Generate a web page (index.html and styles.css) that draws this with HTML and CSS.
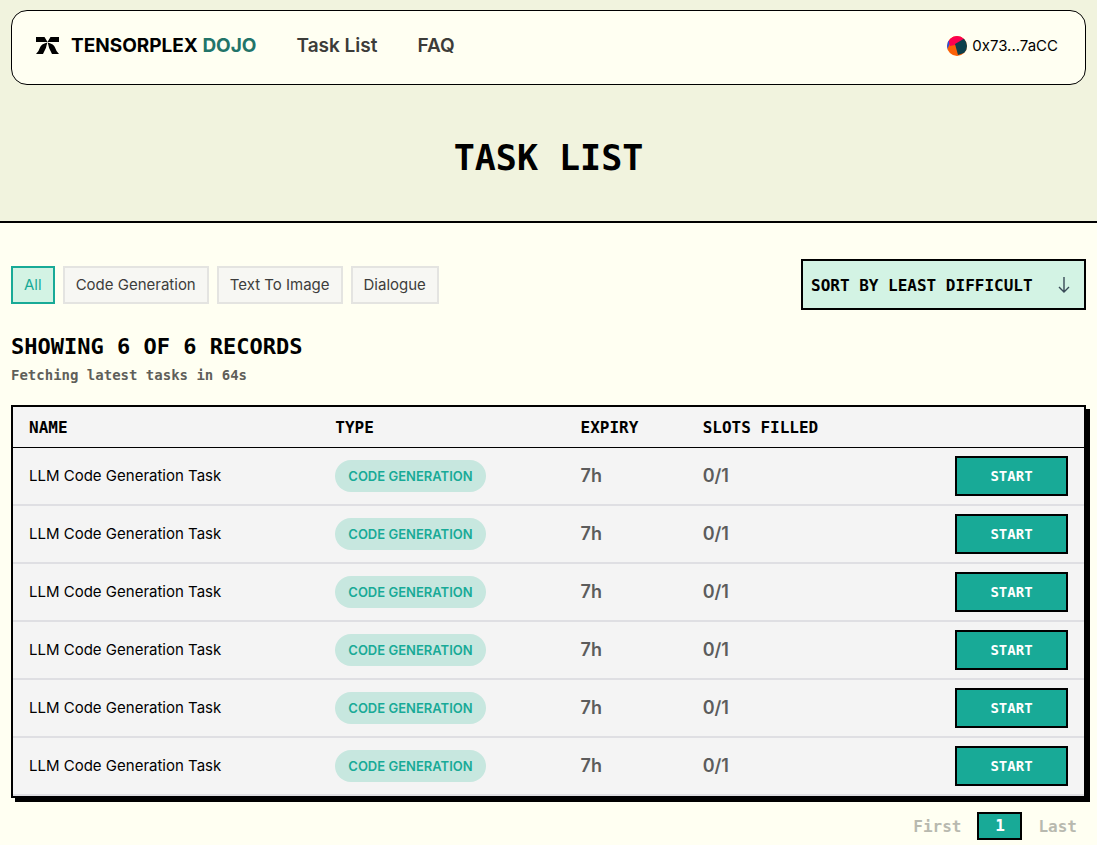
FILE: index.html
```html
<!DOCTYPE html>
<html lang="en">
<head>
<meta charset="utf-8">
<meta name="viewport" content="width=device-width, initial-scale=1">
<title>Tensorplex Dojo - Task List</title>
<link rel="stylesheet" href="styles.css">
</head>
<body>
<header class="hero">
  <nav class="navbar" aria-label="Main">
    <a class="brand" href="#">
      <svg class="brand-mark" viewBox="0 0 24 18" aria-hidden="true">
        <path d="M0 0H8.500L11.500 5H0ZM23 0H14.500L11.500 5H23ZM11.300 5.500Q10.500 11.500 7 17H0Q3 14 4 10.500Q5 7 11.300 5.500ZM11.700 5.500Q12.500 11.500 16 17H23Q20 14 19 10.500Q18 7 11.700 5.500Z"/>
      </svg>
      <span class="brand-name">TENSORPLEX <span class="brand-accent">DOJO</span></span>
    </a>
    <a class="nav-link" href="#">Task List</a>
    <a class="nav-link" href="#">FAQ</a>
    <button class="wallet" type="button">
      <svg class="avatar" viewBox="0 0 20 20" aria-hidden="true">
        <clipPath id="disc"><circle cx="10" cy="10" r="10"/></clipPath>
        <g clip-path="url(#disc)">
          <path fill="#fb6107" d="M0 0H20V20H0Z"/>
          <path fill="#2450e1" d="M0 3L4 5L0 14Z"/>
          <path fill="#fc0150" d="M3 0H20V2L8 9L3 10L2 6Z"/>
          <path fill="#0d404c" d="M8 8L20 1V16L11 19Z"/>
        </g>
      </svg>
      <span>0x73...7aCC</span>
    </button>
  </nav>
  <h1 class="title">TASK LIST</h1>
</header>
<main class="content">
  <div class="toolbar">
    <div class="filters">
      <button class="filter filter-active" type="button">All</button>
      <button class="filter" type="button">Code Generation</button>
      <button class="filter" type="button">Text To Image</button>
      <button class="filter" type="button">Dialogue</button>
    </div>
    <div class="sort">
      <select class="sort-select" aria-label="Sort tasks">
        <option>SORT BY LEAST DIFFICULT</option>
        <option>SORT BY MOST DIFFICULT</option>
      </select>
      <svg class="sort-arrow" viewBox="0 0 12 16" aria-hidden="true"><path d="M6 0V15M1 10L6 15L11 10"/></svg>
    </div>
  </div>
  <h2 class="count">SHOWING 6 OF 6 RECORDS</h2>
  <p class="refresh">Fetching latest tasks in 64s</p>
  <div class="table-box">
    <table class="tasks">
      <colgroup><col class="col-name"><col class="col-type"><col class="col-small"><col class="col-small"><col></colgroup>
      <thead>
        <tr><th>NAME</th><th>TYPE</th><th>EXPIRY</th><th colspan="2">SLOTS FILLED</th></tr>
      </thead>
      <tbody>
        <tr><td>LLM Code Generation Task</td><td><span class="pill">CODE GENERATION</span></td><td class="stat">7h</td><td class="stat">0/1</td><td class="action"><button class="start" type="button">START</button></td></tr>
        <tr><td>LLM Code Generation Task</td><td><span class="pill">CODE GENERATION</span></td><td class="stat">7h</td><td class="stat">0/1</td><td class="action"><button class="start" type="button">START</button></td></tr>
        <tr><td>LLM Code Generation Task</td><td><span class="pill">CODE GENERATION</span></td><td class="stat">7h</td><td class="stat">0/1</td><td class="action"><button class="start" type="button">START</button></td></tr>
        <tr><td>LLM Code Generation Task</td><td><span class="pill">CODE GENERATION</span></td><td class="stat">7h</td><td class="stat">0/1</td><td class="action"><button class="start" type="button">START</button></td></tr>
        <tr><td>LLM Code Generation Task</td><td><span class="pill">CODE GENERATION</span></td><td class="stat">7h</td><td class="stat">0/1</td><td class="action"><button class="start" type="button">START</button></td></tr>
        <tr><td>LLM Code Generation Task</td><td><span class="pill">CODE GENERATION</span></td><td class="stat">7h</td><td class="stat">0/1</td><td class="action"><button class="start" type="button">START</button></td></tr>
      </tbody>
    </table>
  </div>
  <nav class="pager" aria-label="Pages">
    <button class="page-end" type="button" disabled>First</button>
    <button class="page-current" type="button" aria-current="page">1</button>
    <button class="page-end" type="button" disabled>Last</button>
  </nav>
</main>
</body>
</html>
```
FILE: styles.css
```css
:root {
  --cream: #fffff2;
  --green: #18aa97;
  --mint: #d3f3e4;
  --sans: Inter, "Liberation Sans", sans-serif;
  --mono: "DejaVu Sans Mono", "Liberation Mono", monospace;
}

* { box-sizing: border-box; }

body {
  margin: 0;
  background: var(--cream);
  color: #000;
  font: 15px/24px var(--sans);
}

a { color: inherit; text-decoration: none; }
button, select { margin: 0; font: inherit; color: inherit; border-radius: 0; cursor: pointer; }

.hero {
  padding: 10px 11px 40px;
  background: #f1f3de;
  border-bottom: 2px solid #000;
}

.navbar {
  display: flex;
  align-items: center;
  height: 75px;
  padding: 0 27px 4px 24px;
  background: var(--cream);
  border: 1px solid #000;
  border-radius: 16px;
}

.brand { display: flex; align-items: center; gap: 11px; }
.brand-mark { width: 24px; height: 18px; }
.brand-name { font-size: 19px; font-weight: 700; }
.brand-accent { color: #227469; }

.nav-link {
  margin-left: 40px;
  font-size: 19px;
  font-weight: 600;
  color: #3c3c39;
}

.wallet {
  display: flex;
  align-items: center;
  gap: 5px;
  margin-left: auto;
  padding: 0;
  background: none;
  border: 0;
}
.avatar { width: 20px; height: 20px; }

.title {
  margin: 50px 0 0;
  font: 700 35px/46px var(--mono);
  text-align: center;
}

.content { padding: 36px 11px 0; }

.toolbar { display: flex; align-items: center; justify-content: space-between; }
.filters { display: flex; gap: 8px; }

.filter {
  height: 38px;
  padding: 1px 11px 0;
  background: #f7f7f3;
  border: 2px solid #e4e4e1;
  color: #3d3d3b;
}
.filter-active { background: var(--mint); border-color: var(--green); color: var(--green); }

.sort { position: relative; }
.sort-select {
  display: block;
  width: 285px;
  height: 51px;
  padding: 2px 40px 0 8px;
  appearance: none;
  background: var(--mint);
  border: 2px solid #000;
  font: 700 16px/24px var(--mono);
}
.sort-arrow {
  position: absolute;
  top: 18px;
  right: 16px;
  width: 12px;
  height: 16px;
  fill: none;
  stroke: #394a57;
  stroke-width: 1.4;
  pointer-events: none;
}

.count { margin: 21px 0 0; font: 700 22px/32px var(--mono); }
.refresh { margin: 2px 0 20px; font: 700 14px/20px var(--mono); color: #5f5f5a; }

.table-box {
  background: #f4f4f4;
  border: 2px solid #000;
  box-shadow: 4px 4px 0 #000;
}
.tasks { width: 100%; table-layout: fixed; border-collapse: separate; border-spacing: 0; }
.col-name { width: 28.6%; }
.col-type { width: 22.9%; }
.col-small { width: 11.4%; }

.tasks th {
  height: 41px;
  padding: 2px 16px 0;
  border-bottom: 1px solid #000;
  font: 700 16px/24px var(--mono);
  text-align: left;
}
.tasks td {
  height: 58px;
  padding: 0 16px;
  border-bottom: 2px solid #dfdfe3;
}
.tasks .stat { font-size: 18px; font-weight: 600; color: #5c5c5c; }
.tasks .action { text-align: right; }

.pill {
  display: inline-block;
  padding: 0 13px;
  border-radius: 16px;
  background: #c7e7df;
  color: var(--green);
  font-size: 13px;
  line-height: 32px;
  font-weight: 600;
  vertical-align: middle;
}

.start {
  width: 113px;
  height: 40px;
  padding: 0;
  background: var(--green);
  border: 2px solid #000;
  color: #fff;
  font: 700 14px/20px var(--mono);
  vertical-align: middle;
}

.pager {
  display: flex;
  justify-content: flex-end;
  align-items: center;
  gap: 16px;
  margin-top: 14px;
  padding: 0 9px 5px;
  font: 700 16px/24px var(--mono);
}
.page-end { padding: 2px 0 0; background: none; border: 0; color: #b8b9af; cursor: default; }
.page-current {
  width: 45px;
  height: 28px;
  padding: 0;
  background: var(--green);
  border: 2px solid #000;
  color: #fff;
}
```
